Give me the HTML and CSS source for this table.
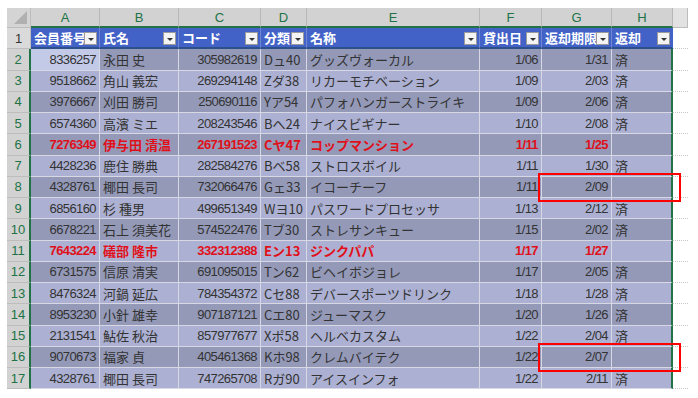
FILE: index.html
```html
<!DOCTYPE html>
<html lang="ja">
<head>
<meta charset="utf-8">
<title>貸出一覧</title>
<link rel="stylesheet" href="styles.css">
</head>
<body>
<div class="page">
  <div class="sheet">
    <div class="corner"><span class="tri"></span></div>
    <div class="colh sel">A</div>
    <div class="colh sel">B</div>
    <div class="colh sel">C</div>
    <div class="colh sel">D</div>
    <div class="colh sel">E</div>
    <div class="colh sel">F</div>
    <div class="colh sel">G</div>
    <div class="colh sel">H</div>
    <div class="colh"></div>

    <div class="rowh first">1</div>
    <div class="hd">会員番号<span class="dd"></span></div>
    <div class="hd">氏名<span class="dd"></span></div>
    <div class="hd">コード<span class="dd"></span></div>
    <div class="hd">分類<span class="dd"></span></div>
    <div class="hd">名称<span class="dd"></span></div>
    <div class="hd">貸出日<span class="dd"></span></div>
    <div class="hd">返却期限<span class="dd"></span></div>
    <div class="hd last">返却<span class="dd"></span></div>
    <div class="out"></div>

    <div class="rowh">2</div>
    <div class="c n even active">8336257</div><div class="c even">永田 史</div><div class="c n even">305982619</div><div class="c even">Dュ40</div><div class="c even">グッズヴォーカル</div><div class="c n even">1/06</div><div class="c n even">1/31</div><div class="c even last">済</div><div class="out"></div>

    <div class="rowh">3</div>
    <div class="c n odd">9518662</div><div class="c odd">角山 義宏</div><div class="c n odd">269294148</div><div class="c odd">Zダ38</div><div class="c odd">リカーモチベーション</div><div class="c n odd">1/09</div><div class="c n odd">2/03</div><div class="c odd last">済</div><div class="out"></div>

    <div class="rowh">4</div>
    <div class="c n even">3976667</div><div class="c even">刈田 勝司</div><div class="c n even">250690116</div><div class="c even">Yア54</div><div class="c even">パフォハンガーストライキ</div><div class="c n even">1/09</div><div class="c n even">2/06</div><div class="c even last">済</div><div class="out"></div>

    <div class="rowh">5</div>
    <div class="c n odd">6574360</div><div class="c odd">高濱 ミエ</div><div class="c n odd">208243546</div><div class="c odd">Bへ24</div><div class="c odd">ナイスビギナー</div><div class="c n odd">1/10</div><div class="c n odd">2/08</div><div class="c odd last">済</div><div class="out"></div>

    <div class="rowh">6</div>
    <div class="c n even red">7276349</div><div class="c even red">伊与田 清温</div><div class="c n even red">267191523</div><div class="c even red">Cヤ47</div><div class="c even red">コップマンション</div><div class="c n even red">1/11</div><div class="c n even red">1/25</div><div class="c even last"></div><div class="out"></div>

    <div class="rowh">7</div>
    <div class="c n odd">4428236</div><div class="c odd">鹿住 勝典</div><div class="c n odd">282584276</div><div class="c odd">Bベ58</div><div class="c odd">ストロスボイル</div><div class="c n odd">1/11</div><div class="c n odd">1/30</div><div class="c odd last">済</div><div class="out"></div>

    <div class="rowh">8</div>
    <div class="c n even">4328761</div><div class="c even">椰田 長司</div><div class="c n even">732066476</div><div class="c even">Gェ33</div><div class="c even">イコーチーフ</div><div class="c n even">1/11</div><div class="c n even">2/09</div><div class="c even last"></div><div class="out"></div>

    <div class="rowh">9</div>
    <div class="c n odd">6856160</div><div class="c odd">杉 種男</div><div class="c n odd">499651349</div><div class="c odd">Wヨ10</div><div class="c odd">パスワードプロセッサ</div><div class="c n odd">1/13</div><div class="c n odd">2/12</div><div class="c odd last">済</div><div class="out"></div>

    <div class="rowh">10</div>
    <div class="c n even">6678221</div><div class="c even">石上 須美花</div><div class="c n even">574522476</div><div class="c even">Tブ30</div><div class="c even">ストレサンキュー</div><div class="c n even">1/15</div><div class="c n even">2/02</div><div class="c even last">済</div><div class="out"></div>

    <div class="rowh">11</div>
    <div class="c n odd red">7643224</div><div class="c odd red">礒部 隆市</div><div class="c n odd red">332312388</div><div class="c odd red">Eン13</div><div class="c odd red">ジンクパパ</div><div class="c n odd red">1/17</div><div class="c n odd red">1/27</div><div class="c odd last"></div><div class="out"></div>

    <div class="rowh">12</div>
    <div class="c n even">6731575</div><div class="c even">信原 清実</div><div class="c n even">691095015</div><div class="c even">Tン62</div><div class="c even">ビヘイボジョレ</div><div class="c n even">1/17</div><div class="c n even">2/05</div><div class="c even last">済</div><div class="out"></div>

    <div class="rowh">13</div>
    <div class="c n odd">8476324</div><div class="c odd">河鍋 延広</div><div class="c n odd">784354372</div><div class="c odd">Cセ88</div><div class="c odd">デバースポーツドリンク</div><div class="c n odd">1/18</div><div class="c n odd">1/28</div><div class="c odd last">済</div><div class="out"></div>

    <div class="rowh">14</div>
    <div class="c n even">8953230</div><div class="c even">小針 雄幸</div><div class="c n even">907187121</div><div class="c even">Cエ80</div><div class="c even">ジューマスク</div><div class="c n even">1/20</div><div class="c n even">1/26</div><div class="c even last">済</div><div class="out"></div>

    <div class="rowh">15</div>
    <div class="c n odd">2131541</div><div class="c odd">鮎佐 秋治</div><div class="c n odd">857977677</div><div class="c odd">Xポ58</div><div class="c odd">ヘルベカスタム</div><div class="c n odd">1/22</div><div class="c n odd">2/04</div><div class="c odd last">済</div><div class="out"></div>

    <div class="rowh">16</div>
    <div class="c n even">9070673</div><div class="c even">福家 貞</div><div class="c n even">405461368</div><div class="c even">Kホ98</div><div class="c even">クレムバイテク</div><div class="c n even">1/22</div><div class="c n even">2/07</div><div class="c even last"></div><div class="out"></div>

    <div class="rowh">17</div>
    <div class="c n odd">4328761</div><div class="c odd">椰田 長司</div><div class="c n odd">747265708</div><div class="c odd">Rガ90</div><div class="c odd">アイスインフォ</div><div class="c n odd">1/22</div><div class="c n odd">2/11</div><div class="c odd last">済</div><div class="out"></div>
  </div>
  <div class="mark mark-1"></div>
  <div class="mark mark-2"></div>
</div>
</body>
</html>
```

FILE: styles.css
```css
* { box-sizing: border-box; }
html, body { margin: 0; padding: 0; background: #ffffff; }
body { width: 698px; height: 398px; overflow: hidden; font-family: "Noto Sans CJK JP", "Liberation Sans", sans-serif; }

.page { position: relative; width: 698px; height: 398px; padding: 8px 0 0 7px; }

.sheet {
  display: grid;
  grid-template-columns: 24px 69px 79px 82px 46px 173px 62px 70px 61px 15px;
  grid-template-rows: 20px repeat(17, 21.25px);
}

.corner {
  background: #d4d4d4;
  border-right: 1px solid #bdbdbd;
  border-bottom: 1px solid #bdbdbd;
  position: relative;
}
.corner .tri {
  position: absolute; right: 3px; bottom: 3px;
  width: 0; height: 0;
  border-left: 13px solid transparent;
  border-bottom: 13px solid #b0b0b0;
}

.colh {
  background: #e2e2e2;
  border-right: 1px solid #bdbdbd;
  border-bottom: 1px solid #bdbdbd;
  display: flex; align-items: center; justify-content: center;
  font-family: "Liberation Sans", "Noto Sans CJK JP", sans-serif;
  font-size: 13px; color: #444;
}
.colh.sel {
  background: #d2d2d2;
  color: #217346;
  border-bottom: 2px solid #217346;
  border-right-color: #b8b8b8;
}

.rowh {
  background: #d2d2d2;
  border-bottom: 1px solid #bdbdbd;
  border-right: 2px solid #217346;
  display: flex; align-items: center; justify-content: center;
  font-family: "Liberation Sans", "Noto Sans CJK JP", sans-serif;
  font-size: 13px; color: #217346;
}
.rowh.first { color: #333; border-right: 1px solid #bdbdbd; background: #dadada; }

.hd {
  background: #4262c8;
  color: #ffffff;
  font-weight: bold;
  font-size: 13px;
  border-right: 1px solid #6f86d2;
  border-bottom: 2px solid #2d4f8a;
  display: flex; align-items: center;
  padding: 0 2px 0 3px;
  position: relative;
  white-space: nowrap;
}
.hd .dd {
  position: absolute; right: 2px; bottom: 2px;
  width: 13px; height: 13px;
  background: #f4f4f4;
  border: 1px solid #9a9a9a;
}
.hd .dd::after {
  content: ""; position: absolute; left: 3px; top: 5px;
  border-left: 3px solid transparent; border-right: 3px solid transparent;
  border-top: 3px solid #333;
}

.c {
  font-size: 13px;
  color: #333;
  border-right: 1px solid #d8d8e4;
  border-bottom: 1px solid #d8d8e4;
  display: flex; align-items: center;
  padding: 0 2px 0 3px;
  white-space: nowrap; overflow: hidden;
}
.c.n {
  justify-content: flex-end;
  font-family: "Liberation Sans", "Noto Sans CJK JP", sans-serif;
  font-size: 13px;
  letter-spacing: -0.6px;
  padding-right: 3px;
}
.c.odd { background: #acb0d2; }
.c.even { background: #9499b8; }
.c.active { background: #c2cae8; }
.c.red { color: #e0101a; font-weight: bold; }
.c.last { border-right: 2px solid #217346; }
.hd.last { border-right: 1px solid #4262c8; }

.out { border-bottom: 1px dotted #c8c8c8; background: #fff; }

.mark {
  position: absolute;
  left: 538px; width: 143px; height: 29px;
  border: 2px solid #ff0000;
}
.mark-1 { top: 173px; }
.mark-2 { top: 343px; }
```
